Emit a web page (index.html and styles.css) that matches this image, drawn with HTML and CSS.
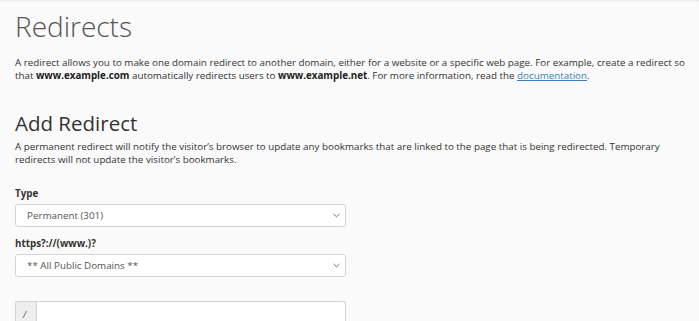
FILE: index.html
```html
<!DOCTYPE html>
<html>
<head>
<meta charset="utf-8">
<link rel="stylesheet" href="styles.css">
</head>
<body>
<div class="page">
  <h1 class="title">Redirects</h1>
  <p class="intro">A redirect allows you to make one domain redirect to another domain, either for a website or a specific web page. For example, create a redirect so that <b>www.example.com</b> automatically redirects users to <b>www.example.net</b>. For more information, read the <a href="#">documentation</a>.</p>
  <h2 class="section">Add Redirect</h2>
  <p class="desc">A permanent redirect will notify the visitor’s browser to update any bookmarks that are linked to the page that is being redirected. Temporary redirects will not update the visitor’s bookmarks.</p>
  <div class="field">
    <label class="label">Type</label>
    <div class="select"><span>Permanent (301)</span><svg class="chev" viewBox="0 0 8 5" width="7" height="5"><path d="M0.7 0.8 L4 4 L7.3 0.8" fill="none" stroke="#666" stroke-width="1.1"/></svg></div>
  </div>
  <div class="field">
    <label class="label">https?://(www.)?</label>
    <div class="select"><span>** All Public Domains **</span><svg class="chev" viewBox="0 0 8 5" width="7" height="5"><path d="M0.7 0.8 L4 4 L7.3 0.8" fill="none" stroke="#666" stroke-width="1.1"/></svg></div>
  </div>
  <div class="group">
    <span class="addon">/</span>
    <span class="input"></span>
  </div>
</div>
</body>
</html>
```
FILE: styles.css
```css
html, body {
  margin: 0;
  padding: 0;
  background: #fafafa;
  height: 100%;
}
body {
  font-family: "Open Sans", "DejaVu Sans", sans-serif;
  color: #333;
  box-shadow: inset 0 2px 2px -1px rgba(0,0,0,0.08);
}
.page {
  padding: 9px 10px 0 15px;
}
.title {
  font-size: 28px;
  font-weight: 300;
  color: #555;
  margin: 0;
  line-height: 34px;
}
.intro {
  font-size: 9.8px;
  line-height: 13px;
  margin: 13px 0 0;
  color: #333;
}
.intro b { font-weight: 700; color: #222; }
.intro a { color: #3a7ec2; text-decoration: underline; }
.section {
  font-size: 20.5px;
  font-weight: 400;
  color: #333;
  margin: 28px 0 0;
  line-height: 26px;
}
.desc {
  font-size: 9.8px;
  line-height: 13px;
  margin: 4px 0 0;
  color: #333;
}
.field {
  margin-top: 21px;
  width: 331px;
}
.field + .field { margin-top: 10px; }
.label {
  display: block;
  font-size: 9.8px;
  font-weight: 700;
  color: #333;
  line-height: 13px;
  margin-bottom: 4px;
}
.select {
  box-sizing: border-box;
  display: flex;
  align-items: center;
  justify-content: space-between;
  height: 23px;
  border: 1px solid #d4d4d4;
  border-radius: 3px;
  background: #fff;
  padding: 0 5px 0 11px;
  font-size: 9.8px;
  color: #555;
}
.group {
  margin-top: 24px;
  width: 331px;
  display: flex;
  height: 22px;
}
.addon {
  width: 21px;
  box-sizing: border-box;
  background: #eee;
  border: 1px solid #d4d4d4;
  border-right: none;
  border-radius: 3px 0 0 0;
  font-size: 9px;
  color: #555;
  font-style: italic;
  padding: 6px 0 0 7px;
}
.input {
  flex: 1;
  background: #fff;
  border: 1px solid #d4d4d4;
  border-bottom: none;
  border-radius: 0 3px 0 0;
}
```
